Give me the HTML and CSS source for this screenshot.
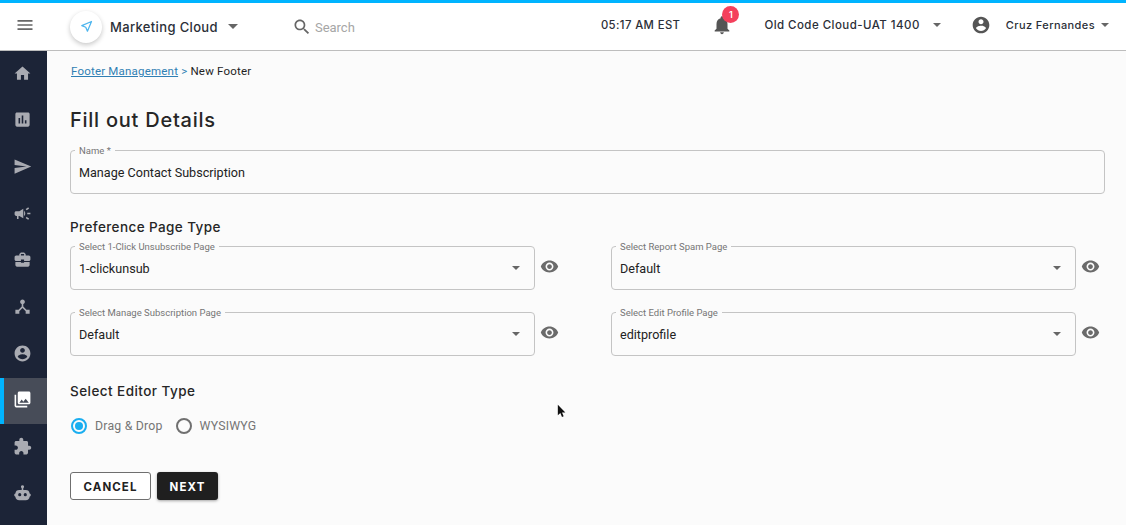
FILE: index.html
```html
<!DOCTYPE html>
<html lang="en">
<head>
<meta charset="utf-8">
<title>New Footer</title>
<link rel="stylesheet" href="styles.css">
</head>
<body>
<header class="topbar">
  <button class="menu-btn" aria-label="Menu"><svg viewBox="0 0 24 24" class="i20"><path d="M3 18h18v-2H3v2zm0-5h18v-2H3v2zm0-7v2h18V6H3z"/></svg></button>
  <div class="logo"><svg viewBox="0 0 24 24" class="logo-icon"><path d="M20 4L4.5 10.5l6.3 2.7 2.7 6.3z"/></svg></div>
  <span class="brand">Marketing Cloud</span>
  <span class="caret caret-brand"></span>
  <div class="search"><svg viewBox="0 0 24 24" class="i20"><path d="M15.5 14h-.79l-.28-.27C15.41 12.59 16 11.11 16 9.5 16 5.91 13.09 3 9.5 3S3 5.91 3 9.5 5.91 16 9.5 16c1.61 0 3.09-.59 4.23-1.57l.27.28v.79l5 4.99L20.49 19l-4.99-5zm-6 0C7.01 14 5 11.99 5 9.5S7.01 5 9.5 5 14 7.01 14 9.5 11.99 14 9.5 14z"/></svg><span>Search</span></div>
  <div class="top-right">
    <span class="time">05:17 AM EST</span>
    <div class="bell"><svg viewBox="0 0 24 24" class="i22"><path d="M12 22c1.1 0 2-.9 2-2h-4c0 1.1.89 2 2 2zm6-6v-5c0-3.07-1.64-5.64-4.5-6.32V4c0-.83-.67-1.5-1.5-1.5s-1.5.67-1.5 1.5v.68C7.63 5.36 6 7.92 6 11v5l-2 2v1h16v-1l-2-2z"/></svg><span class="badge">1</span></div>
    <span class="org">Old Code Cloud-UAT 1400</span>
    <span class="caret"></span>
    <svg viewBox="0 0 24 24" class="i20 user-icon"><path d="M12 2C6.48 2 2 6.48 2 12s4.48 10 10 10 10-4.48 10-10S17.52 2 12 2zm0 3c1.66 0 3 1.34 3 3s-1.34 3-3 3-3-1.34-3-3 1.34-3 3-3zm0 14.2c-2.5 0-4.71-1.28-6-3.22.03-1.99 4-3.08 6-3.08 1.99 0 5.97 1.09 6 3.08-1.29 1.94-3.5 3.22-6 3.22z"/></svg>
    <span class="user">Cruz Fernandes</span>
    <span class="caret"></span>
  </div>
</header>
<div class="shell">
  <nav class="sidebar">
    <a class="nav-item"><svg viewBox="0 0 24 24"><path d="M10 20v-6h4v6h5v-8h3L12 3 2 12h3v8z"/></svg></a>
    <a class="nav-item"><svg viewBox="0 0 24 24"><path d="M19 3H5c-1.1 0-2 .9-2 2v14c0 1.1.9 2 2 2h14c1.1 0 2-.9 2-2V5c0-1.1-.9-2-2-2zM9 17H7v-7h2v7zm4 0h-2V7h2v10zm4 0h-2v-4h2v4z"/></svg></a>
    <a class="nav-item"><svg viewBox="0 0 24 24"><path d="M2.01 21L23 12 2.01 3 2 10l15 2-15 2z"/></svg></a>
    <a class="nav-item"><svg viewBox="0 0 24 24"><path d="M18 11v2h4v-2h-4zm-2 6.61c.96.71 2.21 1.65 3.2 2.39.4-.53.8-1.07 1.2-1.6-.99-.74-2.24-1.68-3.2-2.4-.4.54-.8 1.08-1.2 1.61zM20.4 5.6c-.4-.53-.8-1.07-1.2-1.6-.99.74-2.24 1.68-3.2 2.4.4.53.8 1.07 1.2 1.6.96-.72 2.21-1.65 3.2-2.4zM4 9c-1.1 0-2 .9-2 2v2c0 1.1.9 2 2 2h1v4h2v-4h1l5 3V6L8 9H4zm11.5 3c0-1.33-.58-2.53-1.5-3.35v6.69c.92-.81 1.5-2.01 1.5-3.34z"/></svg></a>
    <a class="nav-item"><svg viewBox="0 0 24 24"><path d="M10 16v-1H3.01L3 19c0 1.11.89 2 2 2h14c1.11 0 2-.89 2-2v-4h-7v1h-4zm10-9h-4.01V5l-2-2h-4l-2 2v2H4c-1.1 0-2 .9-2 2v3c0 1.11.89 2 2 2h6v-2h4v2h6c1.1 0 2-.9 2-2V9c0-1.1-.9-2-2-2zm-6 0h-4V5h4v2z"/></svg></a>
    <a class="nav-item"><svg viewBox="0 0 24 24"><path d="M17 16l-4-4V8.82C14.16 8.4 15 7.3 15 6c0-1.66-1.34-3-3-3S9 4.34 9 6c0 1.3.84 2.4 2 2.82V12l-4 4H3v5h5v-3.05l4-4.2 4 4.2V21h5v-5h-4z"/></svg></a>
    <a class="nav-item"><svg viewBox="0 0 24 24"><path d="M12 2C6.48 2 2 6.48 2 12s4.48 10 10 10 10-4.48 10-10S17.52 2 12 2zm0 3c1.66 0 3 1.34 3 3s-1.34 3-3 3-3-1.34-3-3 1.34-3 3-3zm0 14.2c-2.5 0-4.71-1.28-6-3.22.03-1.99 4-3.08 6-3.08 1.99 0 5.97 1.09 6 3.08-1.29 1.94-3.5 3.22-6 3.22z"/></svg></a>
    <a class="nav-item active"><svg viewBox="0 0 24 24"><path d="M22 16V4c0-1.1-.9-2-2-2H8c-1.1 0-2 .9-2 2v12c0 1.1.9 2 2 2h12c1.1 0 2-.9 2-2zm-11-4l2.03 2.71L16 11l4 5H8l3-4zM2 6v14c0 1.1.9 2 2 2h14v-2H4V6H2z"/></svg></a>
    <a class="nav-item"><svg viewBox="0 0 24 24"><path d="M20.5 11H19V7c0-1.1-.9-2-2-2h-4V3.5C13 2.12 11.88 1 10.5 1S8 2.12 8 3.5V5H4c-1.1 0-1.99.9-1.99 2v3.8H3.5c1.49 0 2.7 1.21 2.7 2.7s-1.21 2.7-2.7 2.7H2V20c0 1.1.9 2 2 2h3.8v-1.5c0-1.49 1.21-2.7 2.7-2.7 1.49 0 2.7 1.21 2.7 2.7V22H17c1.1 0 2-.9 2-2v-4h1.5c1.38 0 2.5-1.12 2.5-2.5S21.88 11 20.5 11z"/></svg></a>
    <a class="nav-item"><svg viewBox="0 0 24 24"><path fill-rule="evenodd" d="M12 1.500a2 2 0 0 1 1 3.730V7.500h3a5 5 0 0 1 5 4.400 2.200 2.200 0 0 1 1.500 2.100 2.200 2.200 0 0 1-1.500 2.100 5 5 0 0 1-5 4.400H8a5 5 0 0 1-5-4.400A2.200 2.200 0 0 1 1.500 14 2.200 2.200 0 0 1 3 11.900a5 5 0 0 1 5-4.400h3V5.230A2 2 0 0 1 12 1.500zM8.500 11.500a2 2 0 1 0 0 4 2 2 0 0 0 0-4zm7 0a2 2 0 1 0 0 4 2 2 0 0 0 0-4z"/></svg></a>
  </nav>
  <main class="content">
    <p class="crumbs"><a href="#">Footer Management</a> <span class="sep">&gt;</span> New Footer</p>
    <h1>Fill out Details</h1>
    <div class="field field-name"><label>Name *</label><span class="value">Manage Contact Subscription</span></div>
    <h2 class="h-pref">Preference Page Type</h2>
    <div class="grid">
      <div class="row">
        <div class="field"><label>Select 1-Click Unsubscribe Page</label><span class="value">1-clickunsub</span><span class="caret"></span></div>
        <svg viewBox="0 0 24 24" class="eye"><path d="M12 4.5C7 4.5 2.73 7.61 1 12c1.73 4.39 6 7.5 11 7.5s9.27-3.11 11-7.5c-1.73-4.39-6-7.5-11-7.5zM12 17c-2.76 0-5-2.24-5-5s2.24-5 5-5 5 2.24 5 5-2.24 5-5 5zm0-8c-1.66 0-3 1.34-3 3s1.34 3 3 3 3-1.34 3-3-1.34-3-3-3z"/></svg>
      </div>
      <div class="row">
        <div class="field"><label>Select Report Spam Page</label><span class="value">Default</span><span class="caret"></span></div>
        <svg viewBox="0 0 24 24" class="eye"><path d="M12 4.5C7 4.5 2.73 7.61 1 12c1.73 4.39 6 7.5 11 7.5s9.27-3.11 11-7.5c-1.73-4.39-6-7.5-11-7.5zM12 17c-2.76 0-5-2.24-5-5s2.24-5 5-5 5 2.24 5 5-2.24 5-5 5zm0-8c-1.66 0-3 1.34-3 3s1.34 3 3 3 3-1.34 3-3-1.34-3-3-3z"/></svg>
      </div>
      <div class="row">
        <div class="field"><label>Select Manage Subscription Page</label><span class="value">Default</span><span class="caret"></span></div>
        <svg viewBox="0 0 24 24" class="eye"><path d="M12 4.5C7 4.5 2.73 7.61 1 12c1.73 4.39 6 7.5 11 7.5s9.27-3.11 11-7.5c-1.73-4.39-6-7.5-11-7.5zM12 17c-2.76 0-5-2.24-5-5s2.24-5 5-5 5 2.24 5 5-2.24 5-5 5zm0-8c-1.66 0-3 1.34-3 3s1.34 3 3 3 3-1.34 3-3-1.34-3-3-3z"/></svg>
      </div>
      <div class="row">
        <div class="field"><label>Select Edit Profile Page</label><span class="value">editprofile</span><span class="caret"></span></div>
        <svg viewBox="0 0 24 24" class="eye"><path d="M12 4.5C7 4.5 2.73 7.61 1 12c1.73 4.39 6 7.5 11 7.5s9.27-3.11 11-7.5c-1.73-4.39-6-7.5-11-7.5zM12 17c-2.76 0-5-2.24-5-5s2.24-5 5-5 5 2.24 5 5-2.24 5-5 5zm0-8c-1.66 0-3 1.34-3 3s1.34 3 3 3 3-1.34 3-3-1.34-3-3-3z"/></svg>
      </div>
    </div>
    <h2 class="h-editor">Select Editor Type</h2>
    <div class="radios">
      <span class="radio on"></span><span class="radio-label">Drag &amp; Drop</span>
      <span class="radio"></span><span class="radio-label">WYSIWYG</span>
    </div>
    <div class="actions">
      <button class="btn btn-outline">CANCEL</button>
      <button class="btn btn-solid">NEXT</button>
    </div>
    <svg viewBox="0 0 12 18" class="cursor"><path d="M1 1v12.5l3-2.7 2 4.7 2-.9-2-4.5h4z"/></svg>
  </main>
</div>
</body>
</html>
```
FILE: styles.css
```css
* { box-sizing: border-box; }
html, body { margin: 0; height: 100%; }
body {
  width: 1126px;
  height: 525px;
  overflow: hidden;
  font-family: Roboto, "Liberation Sans", sans-serif;
  background: #fbfbfb;
  color: #1f1f1f;
}
svg { fill: currentColor; display: block; flex: none; }
.i22 { width: 22px; height: 22px; }
.i20 { width: 20px; height: 20px; }

.topbar {
  height: 51px;
  border-top: 3px solid #00b4ff;
  border-bottom: 1px solid #bdbdbd;
  background: #fff;
  display: flex;
  align-items: center;
  font-family: Inter, "Liberation Sans", sans-serif;
  color: #2b2f38;
}
.menu-btn {
  border: 0;
  background: none;
  padding: 0;
  margin: 0 0 3px 15px;
  color: #666;
}
.logo {
  width: 32px;
  height: 32px;
  margin-left: 35px;
  border-radius: 50%;
  background: #fff;
  box-shadow: 0 2px 5px rgba(0,0,0,.22);
  display: flex;
  align-items: center;
  justify-content: center;
}
.logo-icon { width: 15px; height: 15px; fill: none; stroke: #4db5ee; stroke-width: 2; stroke-linejoin: round; }
.brand { margin-left: 8px; font-size: 13px; font-weight: 500; letter-spacing: .35px; }
.caret {
  width: 0;
  height: 0;
  border-left: 4px solid transparent;
  border-right: 4px solid transparent;
  border-top: 4px solid #666;
  flex: none;
}
.caret-brand { margin-left: 10px; border-left-width: 5px; border-right-width: 5px; border-top-width: 5px; }
.search {
  margin: 1px 0 0 54px;
  display: flex;
  align-items: center;
  gap: 3px;
  font-family: Roboto, sans-serif;
  font-size: 13px;
  color: #a6a6a6;
}
.search svg { color: #666; }
.top-right {
  margin-left: auto;
  display: flex;
  align-items: center;
  padding: 0 17px 3px 0;
}
.time { font-size: 11.3px; font-weight: 500; letter-spacing: .4px; }
.bell { position: relative; margin-left: 31px; color: #555; }
.badge {
  position: absolute;
  top: -8px;
  left: 11px;
  width: 17px;
  height: 17px;
  border-radius: 50%;
  background: #f4405c;
  color: #fff;
  font-size: 9px;
  font-weight: 600;
  line-height: 17px;
  text-align: center;
}
.org { margin-left: 31px; font-size: 11.5px; font-weight: 500; letter-spacing: .45px; }
.org + .caret { margin-left: 13px; }
.user-icon { margin-left: 30px; color: #555; }
.user { margin-left: 15px; font-size: 11px; font-weight: 500; letter-spacing: .4px; }
.user + .caret { margin-left: 6px; }

.shell { display: flex; height: 474px; }
.sidebar {
  width: 47px;
  flex: none;
  background: #1c2437;
  display: flex;
  flex-direction: column;
  color: #a9abb2;
}
.nav-item {
  height: 46.67px;
  flex: none;
  display: flex;
  align-items: center;
  justify-content: center;
  padding: 0 3px 2px 0;
}
.nav-item svg { width: 19px; height: 19px; }
.nav-item.active {
  background: #474c58;
  border-left: 4px solid #00b4ff;
  padding-right: 7px;
  color: #fff;
}

.content { position: relative; flex: 1; padding: 13px 21px 0 23px; }
.crumbs { margin: 0 0 0 1px; font-size: 11.5px; line-height: 14px; letter-spacing: .2px; color: #1f1f1f; }
.crumbs a { color: #2f7fb4; }
.sep { color: #2f7fb4; }
h1, h2 {
  font-family: Inter, "Liberation Sans", sans-serif;
  margin: 0;
  color: #262626;
}
h1 { margin-top: 29px; font-size: 20px; line-height: 26px; font-weight: 500; letter-spacing: .75px; }
h2 { font-size: 13.5px; font-weight: 500; line-height: 18px; letter-spacing: .4px; }
.field {
  position: relative;
  height: 44px;
  border: 1px solid #c4c4c4;
  border-radius: 4px;
  display: flex;
  align-items: center;
  padding: 0 14px 0 8px;
  background: #fbfbfb;
}
.field label {
  position: absolute;
  top: -6px;
  left: 4px;
  padding: 0 4px;
  font-size: 9.5px;
  line-height: 11px;
  color: #757575;
  background: #fbfbfb;
  white-space: nowrap;
}
.value { flex: 1; font-size: 12.6px; color: #222; }
.field-name { margin-top: 17px; }
.h-pref { margin-top: 24px; }
.grid {
  margin-top: 10px;
  display: grid;
  grid-template-columns: 494px 494px;
  column-gap: 47px;
  row-gap: 22px;
}
.row { display: flex; align-items: flex-start; }
.row .field { width: 465px; flex: none; }
.eye { width: 19px; height: 19px; margin: 11px 0 0 5px; color: #6a6a6a; }
.h-editor { margin-top: 26px; letter-spacing: .45px; }
.radios {
  margin-top: 18px;
  display: flex;
  align-items: center;
  font-size: 12.3px;
  color: #757575;
  letter-spacing: .2px;
}
.radio {
  width: 16px;
  height: 16px;
  margin-left: 1px;
  border: 2px solid #707070;
  border-radius: 50%;
  flex: none;
}
.radio.on { border-color: #1aaef0; display: flex; align-items: center; justify-content: center; }
.radio.on::after { content: ""; width: 8px; height: 8px; border-radius: 50%; background: #1aaef0; }
.radio-label { margin: 0 12px 0 8px; }
.actions { margin-top: 38px; display: flex; gap: 6px; }
.btn {
  height: 28px;
  border-radius: 3px;
  font-family: Inter, "Liberation Sans", sans-serif;
  font-size: 11.5px;
  font-weight: 700;
  letter-spacing: 1.1px;
  padding: 1px 0 0;
}
.btn-outline { width: 81px; border: 1px solid #6f6f6f; background: #fff; color: #222; }
.btn-solid { width: 61px; border: 0; background: #1f1f1f; color: #fff; box-shadow: 0 1px 3px rgba(0,0,0,.35); }
.cursor { position: absolute; left: 510px; top: 353px; width: 10px; height: 15px; color: #111; }
```
